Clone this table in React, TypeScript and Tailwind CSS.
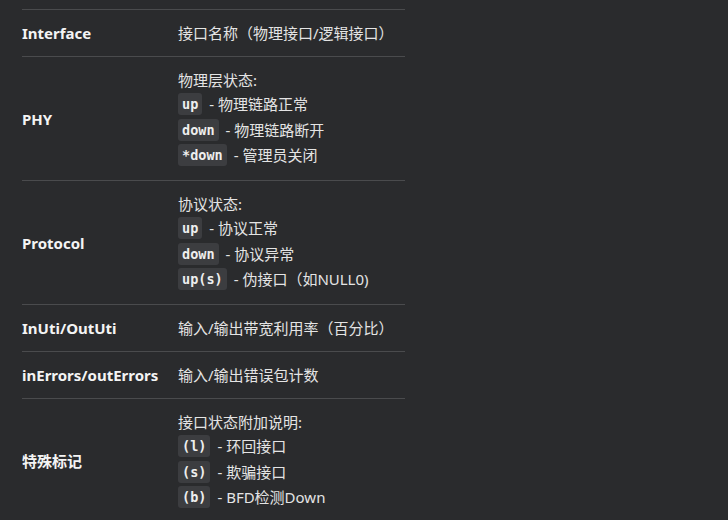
import React from 'react';

type Code = { code: string; desc: string };

interface Row {
  name: string;
  text: string;
  codes?: Code[];
}

const rows: Row[] = [
  { name: 'Interface', text: '接口名称（物理接口/逻辑接口）' },
  {
    name: 'PHY',
    text: '物理层状态:',
    codes: [
      { code: 'up', desc: '物理链路正常' },
      { code: 'down', desc: '物理链路断开' },
      { code: '*down', desc: '管理员关闭' },
    ],
  },
  {
    name: 'Protocol',
    text: '协议状态:',
    codes: [
      { code: 'up', desc: '协议正常' },
      { code: 'down', desc: '协议异常' },
      { code: 'up(s)', desc: '伪接口（如NULL0)' },
    ],
  },
  { name: 'InUti/OutUti', text: '输入/输出带宽利用率（百分比）' },
  { name: 'inErrors/outErrors', text: '输入/输出错误包计数' },
  {
    name: '特殊标记',
    text: '接口状态附加说明:',
    codes: [
      { code: '(l)', desc: '环回接口' },
      { code: '(s)', desc: '欺骗接口' },
      { code: '(b)', desc: 'BFD检测Down' },
    ],
  },
];

const App: React.FC = () => {
  return (
    <div
      className="w-[728px] h-[520px] overflow-hidden bg-[#2a2b2d] pt-[9px] text-[15px] text-[#e4e4e4]"
      style={{ fontFamily: '"Noto Sans", "Noto Sans CJK SC", sans-serif' }}
    >
      <div className="ml-[22px] w-[383px] border-t border-[#4a4b4d]">
        {rows.map((row) => (
          <div
            key={row.name}
            className="grid grid-cols-[156px_1fr] border-b border-[#4a4b4d] py-3"
          >
            <div className="flex items-center font-bold text-[#f4f4f4] leading-[22px]">
              {row.name}
            </div>
            <div className="leading-[22px]">
              <div>{row.text}</div>
              {row.codes?.map((c) => (
                <div key={c.code} className="flex h-[25.7px] items-center">
                  <code
                    className="rounded-[3px] bg-[#3c3d40] px-1 py-[2px] text-[13.5px] font-bold leading-[18px] text-[#eeeeee]"
                    style={{ fontFamily: '"DejaVu Sans Mono", monospace' }}
                  >
                    {c.code}
                  </code>
                  <span className="ml-[7px]">- {c.desc}</span>
                </div>
              ))}
            </div>
          </div>
        ))}
      </div>
    </div>
  );
};

export default App;
